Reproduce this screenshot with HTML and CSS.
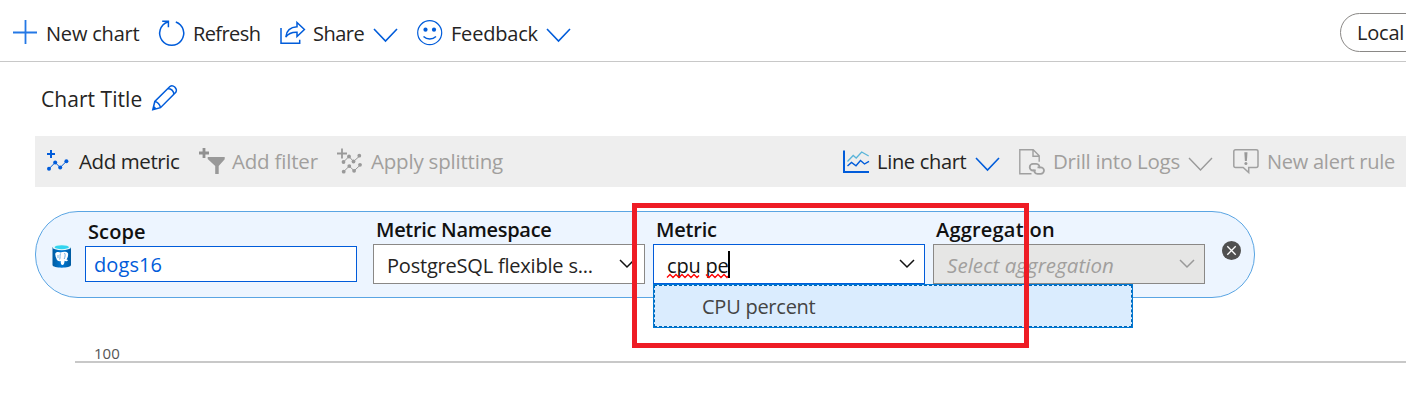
FILE: index.html
```html
<!DOCTYPE html>
<html lang="en">
<head>
<meta charset="utf-8">
<title>Metrics</title>
<link rel="stylesheet" href="styles.css">
</head>
<body>
<header class="commands">
  <svg class="icon plus" viewBox="0 0 26 26"><path d="M12.500 0v24M0 12.500h24" stroke="#2478e5" stroke-width="1.800"/></svg>
  <span class="label new-chart">New chart</span>
  <svg class="icon" viewBox="0 0 26 26"><path d="M8.600 2A12 12 0 1 0 16.800 2M3.200 1.300h6.200v6" fill="none" stroke="#015cda" stroke-width="1.500"/></svg>
  <span class="label refresh">Refresh</span>
  <svg class="icon" viewBox="0 0 26 26"><path d="M1 8v15.200h18.700v-3.500M17 2.500l7.400 7-7.400 7v-4.300c-5.500-.2-8.800 1.300-11.200 4.900C6.300 11.300 10 7.200 17 6.800z" fill="none" stroke="#015cda" stroke-width="1.500"/></svg>
  <span class="label share">Share</span>
  <svg class="icon chevron share-chevron" viewBox="0 0 26 26"><path d="M1 9l11.500 12L24 9" fill="none" stroke="#015cda" stroke-width="1.600"/></svg>
  <svg class="icon" viewBox="0 0 26 26"><circle cx="12.700" cy="12.700" r="12" fill="none" stroke="#015cda" stroke-width="1.200"/><circle cx="8.500" cy="9.700" r="2.100" fill="#015cda"/><circle cx="17" cy="9.700" r="2.100" fill="#015cda"/><path d="M6.500 16.500c3.500 3.200 9 3.200 12.500 0" fill="none" stroke="#015cda" stroke-width="1.500"/></svg>
  <span class="label feedback">Feedback</span>
  <svg class="icon chevron" viewBox="0 0 26 26"><path d="M1 9l11.500 12L24 9" fill="none" stroke="#015cda" stroke-width="1.600"/></svg>
  <div class="time-pill"><span class="label local">Local</span></div>
</header>

<main>
  <div class="title-row">
    <span class="label title">Chart Title</span>
    <svg class="icon pencil" viewBox="0 0 26 26"><path d="M.8 24.800l2-8.300L17.900 1.500c3-2.500 8 2 5.900 5.900L8.500 22.700zM2.800 16.500c2.600.2 5.200 3 5.700 6.200M16 3.500c3.500.3 5.500 2.800 6 5.800" fill="none" stroke="#015cda" stroke-width="1.500"/><path d="M1 24.500l.7-3.200c1.300.3 2 1 2.500 2.500z" fill="#015cda"/></svg>
  </div>

  <div class="toolbar">
    <svg class="icon" viewBox="0 0 26 26"><path d="M5 1v8M1 5h8" stroke="#015cda" stroke-width="2"/><path d="M3 19.700l6.200-6.200 5 5 6.200-6.200" fill="none" stroke="#015cda" stroke-width="1"/><g fill="#015cda"><circle cx="3" cy="19.700" r="2"/><circle cx="9.200" cy="13.500" r="2"/><circle cx="14.200" cy="18.500" r="2"/><circle cx="20.400" cy="12.300" r="2"/></g></svg>
    <span class="label add-metric">Add metric</span>
    <svg class="icon" viewBox="0 0 26 26"><path d="M5-1v10M0 4h10" stroke="#919191" stroke-width="2.800"/><path d="M8.700 8h17v2.300l-6 6.700v8h-3.500v-8L8.700 10z" fill="#999"/></svg>
    <span class="label off add-filter">Add filter</span>
    <svg class="icon" viewBox="0 0 26 26"><path d="M5-.5v10M0 4.500h10" stroke="#999" stroke-width="1.800"/><path d="M6.500 13L12 7.500l4.500 5L23 6.700M6.500 22.800l5.800-5.700 4.800 4.700 6.400-6" fill="none" stroke="#999" stroke-width="1"/><g fill="#999"><circle cx="6.500" cy="13" r="1.900"/><circle cx="12" cy="7.500" r="1.900"/><circle cx="16.500" cy="12.500" r="1.900"/><circle cx="22.300" cy="6.700" r="1.900"/><circle cx="6.700" cy="22.700" r="1.900"/><circle cx="12.300" cy="17.100" r="1.900"/><circle cx="17.100" cy="21.800" r="1.900"/><circle cx="23" cy="15.800" r="1.900"/></g></svg>
    <span class="label off splitting">Apply splitting</span>
    <svg class="icon line-icon" viewBox="0 0 26 26"><path d="M1 1.500v21.500h25" fill="none" stroke="#015cda" stroke-width="2"/><path d="M4.500 12.500l5.700-6 3 2.500 5.500-6 7 4" fill="none" stroke="#59b4d9" stroke-width="1.300"/><path d="M4.500 17l4-3.500 4.500 3.300 4.500-5.300 4 3.500 4.500-2.700" fill="none" stroke="#015cda" stroke-width="1.400"/></svg>
    <span class="label line-chart">Line chart</span>
    <svg class="icon chevron line-chevron" viewBox="0 0 26 26"><path d="M1 9l11.500 12L24 9" fill="none" stroke="#015cda" stroke-width="1.600"/></svg>
    <svg class="icon" viewBox="0 0 26 26"><g fill="none" stroke="#a0a0a0"><path d="M12.500 24.800H.8V.8h13.400l6 6v6M14 .8v6.500h6" stroke-width="1.400"/><path d="M16.800 21.500H14a3.300 3.300 0 0 1 0-6.600h3.200a3.300 3.300 0 0 1 3.100 4.500M18.500 18.300h3.200a3.300 3.300 0 0 1 0 6.600h-3.200a3.300 3.300 0 0 1-3.100-4.500" stroke-width="1.800"/></g></svg>
    <span class="label off drill">Drill into Logs</span>
    <svg class="icon chevron drill-chevron" viewBox="0 0 26 26"><path d="M1 9l11.500 12L24 9" fill="none" stroke="#999" stroke-width="1.400"/></svg>
    <svg class="icon" viewBox="0 0 26 26"><path d="M2.500.8h20.700q1.800 0 1.800 1.700v14.300q0 1.700-1.800 1.700h-7.500v5L10.200 18.500H2.500Q.8 18.500.8 16.800V2.500Q.8.8 2.500.8z" fill="none" stroke="#a0a0a0" stroke-width="1.500"/><path d="M11.300 3.200h3.200l-.6 8.700h-2z" fill="#999"/><circle cx="12.900" cy="14.500" r="1.500" fill="#999"/></svg>
    <span class="label off alert">New alert rule</span>
  </div>

  <div class="metric-pill">
    <svg class="database" viewBox="0 0 20 24"><defs><linearGradient id="cylinder"><stop stop-color="#005ba1"/><stop offset=".5" stop-color="#0078d4"/><stop offset="1" stop-color="#005ba1"/></linearGradient></defs><path d="M.5 3v18c0 3.500 18.500 3.500 18.500 0V3z" fill="url(#cylinder)"/><ellipse cx="9.750" cy="3.200" rx="9.250" ry="3" fill="#e8f7fa"/><ellipse cx="9.750" cy="3.200" rx="7.200" ry="2" fill="#32d4f0"/><path d="M3.300 9.500c1.200-2.200 4-1.700 5.200-.9 2.200-1.100 6-1.500 7.500.7.500 2.200-.5 4.700-1.500 6.200l1.700.4c-1 1.500-2.600 1.500-3.600.9-.2 1.800-.4 3.600-1.600 4.200-1.900.3-2.300-1.300-2.300-4-2 .7-3.800-.2-4.300-2.500-.7-1.600-1.300-3.400-1.100-5z" fill="#fff"/><path d="M8.500 9.500c-1 2 .1 4-.9 6M12.500 9c1.200 1.700.5 4-.3 6M6 11v3" fill="none" stroke="#3a8fd4" stroke-width=".7"/></svg>
    <div class="field scope">
      <span class="caption cap-scope">Scope</span>
      <div class="box active"><span class="label value dogs">dogs16</span></div>
    </div>
    <div class="field">
      <span class="caption cap-namespace">Metric Namespace</span>
      <div class="box"><span class="label value postgres">PostgreSQL flexible s...</span><svg class="arrow" viewBox="0 0 16 10"><path d="M1 1l7 7 7-7" fill="none" stroke="#111" stroke-width="1.500"/></svg></div>
    </div>
    <div class="field">
      <span class="caption cap-metric">Metric</span>
      <div class="box active"><span class="label value typed">cpu pe<svg class="squiggle" viewBox="0 0 63 4"><path d="M0 3.500l3-3 3 3 3-3 3 3 3-3 3 3 3-3 3 3 3-3 3 3 2-2M39 .5l3 3 3-3 3 3 3-3 3 3 3-3 3 3 2-2" fill="none" stroke="#f00" stroke-width="1.300"/></svg><i class="caret"></i></span><svg class="arrow" viewBox="0 0 16 10"><path d="M1 1l7 7 7-7" fill="none" stroke="#111" stroke-width="1.500"/></svg></div>
      <div class="menu"><div class="option"><span class="label cpu">CPU percent</span></div></div>
    </div>
    <div class="field">
      <span class="caption cap-aggregation">Aggregation</span>
      <div class="box disabled"><span class="label value select">Select aggregation</span><svg class="arrow" viewBox="0 0 16 10"><path d="M1 1l7 7 7-7" fill="none" stroke="#999" stroke-width="1.500"/></svg></div>
    </div>
    <svg class="close" viewBox="0 0 20 20"><circle cx="10.500" cy="9.500" r="9.500" fill="#505050"/><path d="M6.300 5.300l8.400 8.400M14.700 5.300l-8.400 8.400" stroke="#fff" stroke-width="1.300"/></svg>
  </div>

  <div class="chart"><span class="tick">100</span></div>
</main>
<div class="highlight"></div>
</body>
</html>
```
FILE: styles.css
```css
* { box-sizing: border-box; }
body {
  margin: 0;
  height: 418px;
  position: relative;
  overflow: hidden;
  background: #fff;
  color: #252423;
  font: 20px/28px "Open Sans", "Noto Sans", sans-serif;
}
svg { display: block; flex: none; overflow: visible; }
.icon { width: 26px; height: 26px; }
.label { flex: none; white-space: nowrap; }
.commands {
  display: flex;
  align-items: center;
  height: 62px;
  padding: 4px 0 0 13px;
  border-bottom: 1px solid #c8c8c8;
}
.commands > .label { padding-top: 2px; }
.new-chart { width: 112px; margin-left: 7px; margin-right: 1px; letter-spacing: -.2px; }
.refresh { width: 87px; margin-left: 8px; letter-spacing: -.6px; }
.share { width: 60px; margin-left: 7px; letter-spacing: -.5px; }
.share-chevron { margin-right: 18px; }
.feedback { width: 95px; margin-left: 8px; letter-spacing: -.2px; }
.time-pill {
  flex: none;
  display: flex;
  align-items: center;
  width: 90px;
  height: 39px;
  margin-left: auto;
  margin-right: -24px;
  padding-left: 16px;
  border: 1px solid #8a8886;
  border-radius: 20px;
}
.local { letter-spacing: -.2px; }
.title-row { display: flex; align-items: center; height: 74px; padding-left: 41px; }
.title { width: 111px; padding-bottom: 1px; font-size: 21px; letter-spacing: .05px; }
.pencil { margin-top: -3px; }
.toolbar {
  display: flex;
  align-items: center;
  height: 51px;
  margin-left: 35px;
  padding-left: 11px;
  background: #eee;
}
.off { color: #a19f9d; }
.add-metric, .add-filter, .splitting, .drill { padding-bottom: 2px; font-size: 20.5px; }
.add-metric { width: 120px; margin-left: 7px; letter-spacing: -.4px; }
.add-filter { width: 105px; margin-left: 7px; letter-spacing: -.2px; }
.splitting { width: 472px; margin-left: 8px; letter-spacing: -.2px; }
.line-chart { width: 98px; margin-left: 8px; letter-spacing: -.3px; }
.line-chevron { margin-right: 18px; }
.drill { width: 135px; margin-left: 8px; letter-spacing: -.25px; }
.drill-chevron { margin-right: 19px; }
.alert { margin-left: 8px; letter-spacing: -.25px; }
.metric-pill {
  display: flex;
  width: 1220px;
  height: 87px;
  margin: 24px 0 0 35px;
  padding-left: 16px;
  border: 1px solid #5aa5e3;
  border-radius: 43px;
  background: #edf5ff;
}
.database { width: 20px; height: 24px; margin: 32px 13px 0 0; }
.field { position: relative; flex: none; width: 272px; margin-right: 8px; padding-top: 4px; }
.scope { margin-right: 16px; padding-top: 6px; }
.caption { display: block; height: 28px; padding-left: 3px; color: #111; font-weight: 600; white-space: nowrap; letter-spacing: -.3px; }
.cap-scope { letter-spacing: .1px; }
.cap-metric { letter-spacing: -.2px; }
.cap-aggregation { letter-spacing: .2px; }
.box { display: flex; align-items: center; justify-content: space-between; height: 40px; padding: 3px 9px 0 13px; border: 1px solid #8a8886; background: #fff; }
.active { border-color: #015cda; }
.scope .box { height: 36px; padding: 2px 0 0 8px; }
.value { letter-spacing: -.2px; }
.value.dogs { letter-spacing: .1px; color: #015cda; }
.arrow { width: 16px; height: 10px; margin-top: -3px; }
.disabled { background: #e6e6e5; }
.value.select { padding-bottom: 2px; font-size: 20.5px; font-style: italic; letter-spacing: .05px; color: #a19f9d; }
.typed { position: relative; color: #111; }
.caret { position: absolute; left: 61px; top: -1px; width: 2px; height: 27px; background: #000; }
.squiggle { position: absolute; left: 0; top: 22px; width: 63px; height: 4px; }
.menu { position: absolute; z-index: 2; left: 0; top: 72px; width: 480px; height: 44px; border: 1px solid #0078d4; background: #fff; }
.option { height: 42px; padding: 7px 0 0 47px; border: 1px dashed #0067b8; background: #daecfe; color: #444; }
.cpu { letter-spacing: -.25px; }
.close { width: 20px; height: 20px; margin: 29px 0 0 8px; }
.chart { height: 65px; margin-left: 75px; padding: 44px 0 0 19px; border-bottom: 2px solid #c8c8c8; }
.tick { display: block; font-size: 15px; line-height: 22px; letter-spacing: 0; color: #555; }
.highlight { position: absolute; z-index: 3; left: 632px; top: 203px; width: 397px; height: 145px; border: 5px solid #ee1c25; }
```
